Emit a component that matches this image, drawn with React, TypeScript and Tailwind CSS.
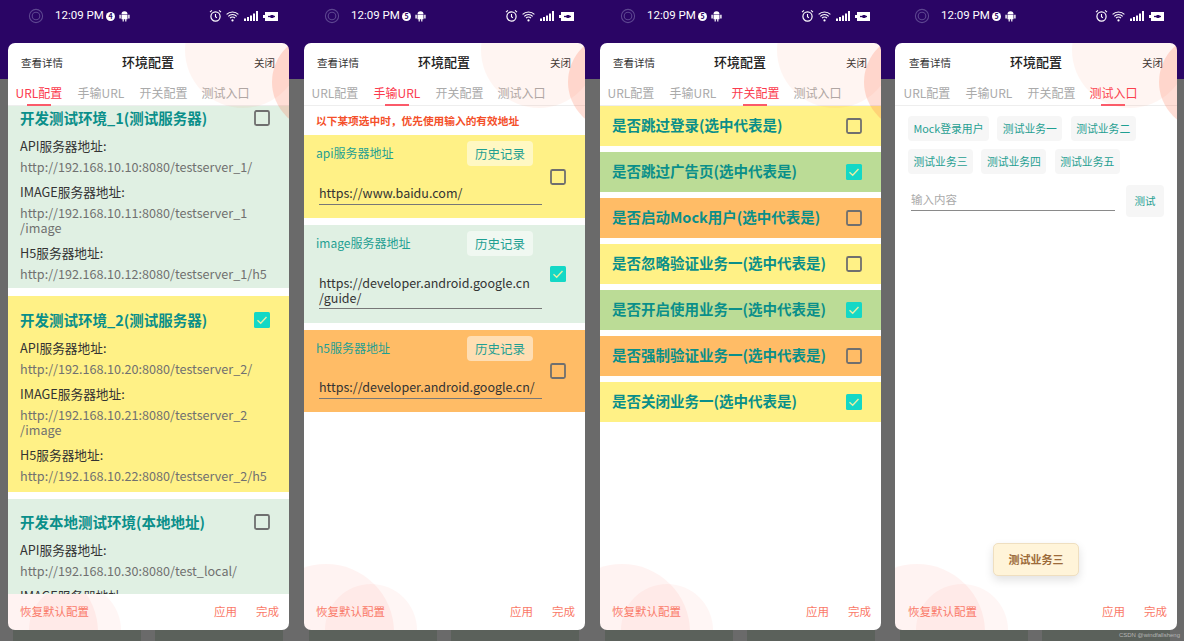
import React from "react";

const font = { fontFamily: '"Noto Sans CJK SC", "Noto Sans", sans-serif' };

function Check({ on }: { on?: boolean }) {
  if (on)
    return (
      <svg width="18" height="18" viewBox="0 0 18 18" className="shrink-0">
        <rect x="1" y="1" width="16" height="16" rx="1.5" fill="#14d8c6" />
        <path d="M4.5 9.2l3.2 3L13.5 6" fill="none" stroke="#e6eea6" strokeWidth="1.4" />
      </svg>
    );
  return (
    <svg width="18" height="18" viewBox="0 0 18 18" className="shrink-0">
      <rect x="2" y="2" width="14" height="14" rx="1.5" fill="none" stroke="#6f6f6f" strokeWidth="1.8" />
    </svg>
  );
}

function StatusBar({ badge, narrow }: { badge: string; narrow?: boolean }) {
  return (
    <div className="flex h-[32px] items-center text-white">
      <svg width="16" height="16" viewBox="0 0 16 16" className={`shrink-0 ${narrow ? "ml-[26px]" : "ml-[28px]"}`}>
        <circle cx="8" cy="8" r="6.6" fill="none" stroke="#5d4690" strokeWidth="1.1" />
        <circle cx="8" cy="8" r="3.8" fill="none" stroke="#5d4690" strokeWidth="1.1" />
      </svg>
      <span className="ml-[11px] w-[47px] text-[11.5px] leading-none font-normal whitespace-nowrap" style={{ fontFamily: "Roboto, sans-serif" }}>
        12:09 PM
      </span>
      <span className="ml-[4px] flex h-[9px] w-[9px] items-center justify-center rounded-full bg-white text-[7px] leading-none font-bold text-[#2a0565]">
        {badge}
      </span>
      <svg width="11" height="12" viewBox="0 0 11 12" className="ml-[4px] shrink-0">
        <path d="M2.5 4.2a3 3 0 016 0zM2.5 4.8h6v4.4H7.4V11.5H6.2V9.2H4.8v2.3H3.6V9.2H2.5zM.4 4.8h1.4v3.6H.4zM9.2 4.8h1.4v3.6H9.2z" fill="#fff" />
      </svg>
      <svg width="13" height="14" viewBox="0 0 13 14" className="ml-[79px] shrink-0">
        <circle cx="6.5" cy="7.5" r="4.6" fill="none" stroke="#fff" strokeWidth="1.2" />
        <path d="M6.5 5v2.8l1.4 1M1 3.2L3 1.4M12 3.2L10 1.4" fill="none" stroke="#fff" strokeWidth="1.1" />
      </svg>
      <svg width="13" height="11" viewBox="0 0 13 11" className="ml-[4px] shrink-0">
        <path d="M.6 3.4a8.3 8.3 0 0111.8 0M2.3 5.3a5.8 5.8 0 018.4 0M4 7.2a3.3 3.3 0 015 0" fill="none" stroke="#fff" strokeWidth="1.1" />
        <circle cx="6.5" cy="9.4" r="1.1" fill="#fff" />
      </svg>
      <svg width="14" height="10" viewBox="0 0 14 10" className="ml-[5px] shrink-0">
        <path d="M0 7.5h2V10H0zM3 6h2v4H3zM6 4.5h2V10H6zM9 2.5h2V10H9zM12 0h2v10h-2z" fill="#fff" />
      </svg>
      <svg width="15" height="9" viewBox="0 0 15 9" className="ml-[5px] shrink-0">
        <path d="M2 0h13v9H2zM0 3h2v3H0z" fill="#fff" />
        <path d="M5 4.5h7" fill="none" stroke="#2a0565" strokeWidth="1.3" />
        <path d="M7.5 3h3v3h-3z" fill="#2a0565" />
      </svg>
    </div>
  );
}

function Dialog({ active, children, badge, last }: { active: number; children: React.ReactNode; badge: string; last?: boolean }) {
  const tabs = ["URL配置", "手输URL", "开关配置", "测试入口"];
  return (
    <div className="h-[641px] w-[296px] shrink-0 bg-[linear-gradient(#2a0565_79px,#6a6a6a_79px)]" style={font}>
      <StatusBar badge={badge} narrow={last} />
      <div className={`relative mt-[11px] flex h-[587px] flex-col overflow-hidden rounded-[7px] bg-white ${last ? "ml-[7px] w-[282px]" : "ml-[8px] w-[281px]"}`}>
        <div className="pointer-events-none absolute top-[521px] left-[-46px] h-[136px] w-[136px] rounded-full bg-[#ff6a5a]/[.08]" />
        <div className="pointer-events-none absolute top-[541px] left-[21px] h-[92px] w-[92px] rounded-full bg-[#ff6a5a]/[.06]" />
        <div className={`flex h-[38px] shrink-0 items-center justify-between pr-[14px] ${last ? "pl-[14px]" : "pl-[13px]"}`}>
          <span className="mt-[2px] w-[60px] text-[10.5px] text-[#333]">查看详情</span>
          <span className="-mt-[1px] text-[13px] font-medium text-[#222]">环境配置</span>
          <span className="mt-[2px] w-[60px] text-right text-[10.5px] text-[#333]">关闭</span>
        </div>
        <div className={`flex h-[25px] shrink-0 gap-[16.5px] border-b border-[#eee] ${last ? "pl-[8.5px]" : "pl-[7.5px]"}`}>
          {tabs.map((t, i) => (
            <div key={t} className={`relative w-[45.5px] text-center text-[12px] leading-[24px] whitespace-nowrap ${i === active ? "text-[#fb3b4e]" : "text-[#aaa]"}`}>
              {t}
              {i === active && <div className="absolute bottom-[-1px] left-[11px] h-[2px] w-[24px] bg-[#fb5a6a]" />}
            </div>
          ))}
        </div>
        <div className="relative z-10 flex min-h-0 flex-1 flex-col overflow-hidden">{children}</div>
        <div className={`relative z-10 flex h-[36px] shrink-0 items-center justify-between pr-[10px] text-[11.5px] text-[#fa7a68] ${last ? "pl-[13px]" : "pl-[12px]"}`}>
          <span>恢复默认配置</span>
          <div className="flex gap-[19px]">
            <span>应用</span>
            <span>完成</span>
          </div>
        </div>
        <div className="pointer-events-none absolute top-[-51px] left-[177px] z-20 h-[116px] w-[116px] rounded-full bg-[#ff7a5a]/[.08]" />
        <div className="pointer-events-none absolute top-[-9px] left-[264px] z-20 h-[96px] w-[96px] rounded-full bg-[#ff6a45]/[.22]" />
      </div>
      <div className={`flex h-[11px] gap-[14px] ${last ? "pl-[12px]" : "pl-[13px]"}`}>
        <div className="w-[128px] bg-[#5b615b]" />
        <div className="w-[128px] bg-[#5b615b]" />
      </div>
    </div>
  );
}

function EnvCard({ title, on, color, rows, className }: { title: string; on?: boolean; color: string; rows: [string, string][]; className: string }) {
  return (
    <div className={`shrink-0 pr-[18px] pl-[12px] ${color} ${className}`}>
      <div className="flex h-[21px] items-center justify-between">
        <span className="text-[14.5px] font-bold whitespace-nowrap text-[#0a8f8a]">{title}</span>
        <Check on={on} />
      </div>
      {rows.map(([a, b]) => (
        <div key={a}>
          <div className="mt-[9px] text-[12.7px] leading-[17px] text-[#333]">{a}</div>
          <div className="mt-[5px] text-[12.6px] leading-[15px] whitespace-pre-line text-[#707070]">{b}</div>
        </div>
      ))}
    </div>
  );
}

function Tab1() {
  return (
    <div className="-mt-[2px] flex flex-col gap-[8px]">
      <EnvCard
        title="开发测试环境_1(测试服务器)"
        color="bg-[#e0f0e3]"
        className="h-[184px] pt-[3px]"
        rows={[
          ["API服务器地址:", "http://192.168.10.10:8080/testserver_1/"],
          ["IMAGE服务器地址:", "http://192.168.10.11:8080/testserver_1\n/image"],
          ["H5服务器地址:", "http://192.168.10.12:8080/testserver_1/h5"],
        ]}
      />
      <EnvCard
        title="开发测试环境_2(测试服务器)"
        on
        color="bg-[#fff186]"
        className="h-[196px] pt-[13px]"
        rows={[
          ["API服务器地址:", "http://192.168.10.20:8080/testserver_2/"],
          ["IMAGE服务器地址:", "http://192.168.10.21:8080/testserver_2\n/image"],
          ["H5服务器地址:", "http://192.168.10.22:8080/testserver_2/h5"],
        ]}
      />
      <EnvCard
        title="开发本地测试环境(本地地址)"
        color="bg-[#e0f0e3]"
        className="-mt-[1px] h-[196px] pt-[12px]"
        rows={[
          ["API服务器地址:", "http://192.168.10.30:8080/test_local/"],
          ["IMAGE服务器地址:", "http://192.168.10.31:8080/test_local/image"],
        ]}
      />
    </div>
  );
}

function InputCard({ label, value, on, color, h, mt }: { label: string; value: string; on?: boolean; color: string; h: string; mt: string }) {
  return (
    <div className={`flex shrink-0 items-center pr-[18px] pl-[12px] ${color} ${h}`}>
      <div className="flex w-[226px] shrink-0 flex-col self-stretch pt-[6px]">
        <div className="flex items-center justify-between pr-[9px]">
          <span className="pb-[2px] text-[12px] text-[#1f9f92]">{label}</span>
          <span className="rounded-[4px] bg-white/50 px-[8px] py-[4px] text-[12.5px] leading-[17px] text-[#1f9f92]">历史记录</span>
        </div>
        <div className={`ml-[3px] border-b border-[#777] pb-[3px] text-[12.5px] leading-[14.5px] whitespace-pre-line text-[#333] ${mt}`}>{value}</div>
      </div>
      <div className="ml-[7px]">
        <Check on={on} />
      </div>
    </div>
  );
}

function Tab2() {
  return (
    <div className="flex flex-col gap-[7px]">
      <div className="-mb-[7px] flex h-[29px] items-center pt-[1px] pl-[12px] text-[10.7px] font-bold text-[#f4502a]">以下某项选中时，优先使用输入的有效地址</div>
      <InputCard label="api服务器地址" value="https://www.baidu.com/" color="bg-[#fff186]" h="h-[83px]" mt="mt-[20px]" />
      <InputCard label="image服务器地址" value={"https://developer.android.google.cn\n/guide/"} on color="bg-[#e0f0e3]" h="h-[98px]" mt="mt-[20px]" />
      <InputCard label="h5服务器地址" value="https://developer.android.google.cn/" color="bg-[#ffbc66]" h="h-[82px]" mt="mt-[19px]" />
    </div>
  );
}

function Tab3() {
  const rows: [string, string, boolean][] = [
    ["是否跳过登录(选中代表是)", "bg-[#fff186]", false],
    ["是否跳过广告页(选中代表是)", "bg-[#bbdc96]", true],
    ["是否启动Mock用户(选中代表是)", "bg-[#ffbc66]", false],
    ["是否忽略验证业务一(选中代表是)", "bg-[#fff186]", false],
    ["是否开启使用业务一(选中代表是)", "bg-[#bbdc96]", true],
    ["是否强制验证业务一(选中代表是)", "bg-[#ffbc66]", false],
    ["是否关闭业务一(选中代表是)", "bg-[#fff186]", true],
  ];
  return (
    <div className="flex flex-col gap-[6.5px]">
      {rows.map(([t, c, on]) => (
        <div key={t} className={`flex h-[39.5px] items-center justify-between pr-[18px] pl-[12px] ${c}`}>
          <span className="pb-[2px] text-[14.5px] font-bold whitespace-nowrap text-[#0a8f8a]">{t}</span>
          <Check on={on} />
        </div>
      ))}
    </div>
  );
}

function Chip({ t }: { t: string }) {
  return <span className="flex h-[25px] items-center rounded-[4px] bg-[#f6f6f6] px-[5.5px] text-[10.8px] whitespace-nowrap text-[#1f9f92]">{t}</span>;
}

function Tab4() {
  return (
    <div className="relative flex flex-1 flex-col pt-[10px] pl-[13px]">
      <div className="flex gap-[8.4px]">
        {["Mock登录用户", "测试业务一", "测试业务二"].map((t) => (
          <Chip key={t} t={t} />
        ))}
      </div>
      <div className="mt-[8px] flex gap-[8.4px]">
        {["测试业务三", "测试业务四", "测试业务五"].map((t) => (
          <Chip key={t} t={t} />
        ))}
      </div>
      <div className="mt-[11px] flex items-start">
        <div className="mt-[4px] ml-[3px] flex h-[22px] w-[204px] items-center border-b border-[#8a8a8a] text-[11.5px] text-[#aaa]">输入内容</div>
        <span className="ml-[11px] flex h-[32px] w-[38px] items-center justify-center rounded-[4px] bg-[#f6f6f6] text-[10.5px] text-[#1f9f92]">测试</span>
      </div>
      <div className="absolute top-[437px] left-[98px] flex h-[33px] w-[86px] items-center justify-center rounded-[5px] border border-[#efdfc0] bg-[#fff4d9] text-[11px] font-bold text-[#9c6b3a] shadow-[0_4px_10px_rgba(0,0,0,0.12)]">
        测试业务三
      </div>
    </div>
  );
}

export default function App() {
  return (
    <div className="relative flex h-[641px] w-[1184px] overflow-hidden">
      <Dialog active={0} badge="4">
        <Tab1 />
      </Dialog>
      <Dialog active={1} badge="5">
        <Tab2 />
      </Dialog>
      <Dialog active={2} badge="5">
        <Tab3 />
      </Dialog>
      <Dialog active={3} badge="5" last>
        <Tab4 />
      </Dialog>
      <span className="absolute right-[4px] bottom-[1px] text-[6px] leading-[9px] text-[#b5b5b5]" style={{ fontFamily: '"Liberation Sans", sans-serif' }}>
        CSDN @windfallsheng
      </span>
    </div>
  );
}
